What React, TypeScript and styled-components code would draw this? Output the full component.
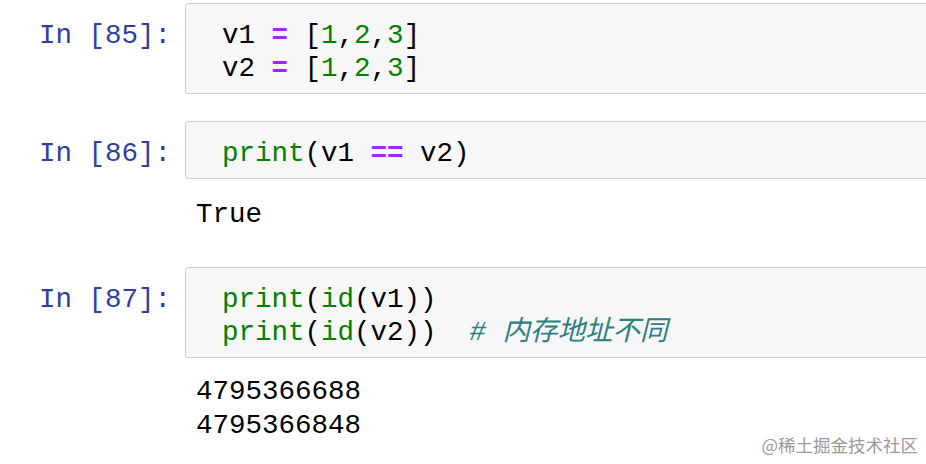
import React from "react";
import styled, { createGlobalStyle } from "styled-components";

const Global = createGlobalStyle`
  html, body { margin: 0; padding: 0; background: #ffffff; }
  body { overflow: hidden; width: 926px; height: 464px; }
`;

const MONO = `"Liberation Mono", "Noto Sans CJK SC", monospace`;

const Notebook = styled.div`
  position: relative;
  width: 926px;
  height: 464px;
  overflow: hidden;
  padding-top: 3px;
  box-sizing: border-box;
  font-family: ${MONO};
  font-size: 27.5px;
  line-height: 33px;
`;

const CellRow = styled.div<{ $mt?: number }>`
  display: grid;
  grid-template-columns: 171px 1000px;
  column-gap: 14px;
  margin-top: ${(p) => p.$mt ?? 0}px;
`;

const Prompt = styled.div`
  color: #303f9f;
  text-align: right;
  padding-top: 16px;
  white-space: pre;
`;

const InputArea = styled.div`
  background: #f7f7f7;
  border: 1px solid #cfcfcf;
  border-radius: 3px;
  padding: 15px 0 8px 36px;
  white-space: pre;
  color: #000;
`;

const OutputRow = styled.div<{ $pt: number }>`
  padding: ${(p) => p.$pt}px 0 0 196px;
  white-space: pre;
  color: #000;
  line-height: 34px;
`;

const Line = styled.div``;

const Kw = styled.span`
  color: #008000;
`;
const Num = styled.span`
  color: #008000;
`;
const Op = styled.span`
  color: #aa22ff;
  font-weight: bold;
`;
const Comment = styled.span`
  color: #2a8080;
  font-style: italic;
`;

const Watermark = styled.div`
  position: absolute;
  right: 8px;
  bottom: 8px;
  font-family: "Noto Sans CJK SC", sans-serif;
  font-size: 17.5px;
  line-height: 22px;
  color: #9a9a9a;
`;

export default function App() {
  return (
    <>
      <Global />
      <Notebook>
        <CellRow>
          <Prompt>In [85]:</Prompt>
          <InputArea>
            <Line>
              v1 <Op>=</Op> [<Num>1</Num>,<Num>2</Num>,<Num>3</Num>]
            </Line>
            <Line>
              v2 <Op>=</Op> [<Num>1</Num>,<Num>2</Num>,<Num>3</Num>]
            </Line>
          </InputArea>
        </CellRow>

        <CellRow $mt={27}>
          <Prompt>In [86]:</Prompt>
          <InputArea>
            <Line>
              <Kw>print</Kw>(v1 <Op>==</Op> v2)
            </Line>
          </InputArea>
        </CellRow>
        <OutputRow $pt={19}>True</OutputRow>

        <CellRow $mt={35}>
          <Prompt>In [87]:</Prompt>
          <InputArea>
            <Line>
              <Kw>print</Kw>(<Kw>id</Kw>(v1))
            </Line>
            <Line>
              <Kw>print</Kw>(<Kw>id</Kw>(v2)){"  "}<Comment># 内存地址不同</Comment>
            </Line>
          </InputArea>
        </CellRow>
        <OutputRow $pt={17}>
          <Line>4795366688</Line>
          <Line>4795366848</Line>
        </OutputRow>
        <Watermark>@稀土掘金技术社区</Watermark>
      </Notebook>
    </>
  );
}
